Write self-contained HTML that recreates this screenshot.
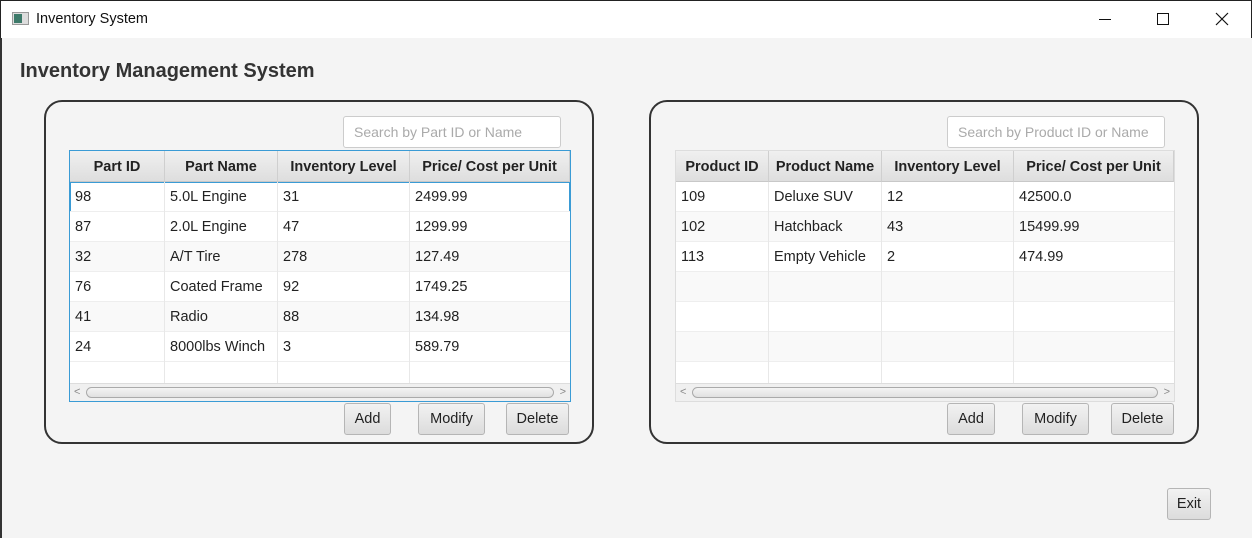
<!DOCTYPE html>
<html><head><meta charset="utf-8"><style>
*{box-sizing:border-box;margin:0;padding:0}
body{width:1252px;height:538px;background:#f4f4f4;font-family:"Liberation Sans",sans-serif;position:relative;overflow:hidden;color:#333}
.abs{position:absolute}
.tb{left:0;top:0;width:1252px;height:38px;background:#fff;border-top:1px solid #222;border-left:1px solid #222;border-right:1px solid #222}
.panel{border:2px solid #333;border-radius:18px;height:344px;width:550px;top:100px}
.search{height:32px;width:218px;top:116px;background:#fff;border:1px solid #ccc;border-radius:3px;font-size:14px;color:#aaa;padding:7px 10px;white-space:nowrap}
.tbl{top:150px;height:252px;background:#fff;border:1px solid #ccc}
.tbl.sel{border:1px solid #3a9bd5}
.hdr{position:absolute;top:0;height:31px;background:linear-gradient(#f0f0f0,#dedede);border-right:1px solid #cfcfcf;border-bottom:1px solid #c8c8c8;font-weight:bold;font-size:14.5px;color:#222;text-align:center;line-height:33px;white-space:nowrap;overflow:hidden}
.cell{position:absolute;height:30px;border-right:1px solid #e8e8e8;font-size:14.5px;line-height:30px;padding-left:5px;color:#222;white-space:nowrap}
.sb{position:absolute;left:0;right:0;bottom:0;height:18px;background:#f0f0f0;border-top:1px solid #ddd}
.sb .th{position:absolute;left:16px;right:16px;top:3px;height:11px;border:1px solid #aaa;border-radius:6px;background:linear-gradient(#f4f4f4,#e0e0e0)}
.sb span{position:absolute;top:0;font-size:11px;color:#888;line-height:17px}
.btn{height:32px;top:403px;border:1px solid #b5b5b5;border-radius:3px;background:linear-gradient(#f2f2f2,#dcdcdc);font-size:14.5px;text-align:center;line-height:30px;color:#222}
</style></head><body>
<div class="abs tb"></div>
<div class="abs" style="left:12px;top:12px;width:17px;height:13px;background:#ddd;border:1px solid #999"><div style="position:absolute;left:1px;top:1px;width:8px;height:9px;background:#3d7a6a"></div></div>
<div class="abs" style="left:36px;top:11px;font-size:14.5px;color:#111">Inventory System</div>
<div class="abs" style="left:1099px;top:19px;width:12px;height:1px;background:#111"></div>
<div class="abs" style="left:1157px;top:13px;width:12px;height:12px;border:1px solid #111"></div>
<svg class="abs" style="left:1215px;top:12px" width="14" height="14"><path d="M1 1L13 13M13 1L1 13" stroke="#111" stroke-width="1.2"/></svg>
<div class="abs" style="left:0;top:38px;width:2px;height:500px;background:#333"></div>
<div class="abs" style="left:20px;top:60px;font-size:20px;font-weight:bold;color:#333">Inventory Management System</div>

<div class="abs panel" style="left:44px"></div>
<div class="abs panel" style="left:649px"></div>
<div class="abs search" style="left:343px">Search by Part ID or Name</div>
<div class="abs search" style="left:947px">Search by Product ID or Name</div>

<div class="abs tbl sel" style="left:69px;width:502px">
<div class="hdr" style="left:0;width:95px">Part ID</div><div class="hdr" style="left:95px;width:113px">Part Name</div><div class="hdr" style="left:208px;width:132px">Inventory Level</div><div class="hdr" style="left:340px;width:160px">Price/ Cost per Unit</div>
<div style="position:absolute;left:0;top:31px;width:500px;height:30px;background:#fff;border:1px solid #3a9bd5"></div>
<div style="position:absolute;left:0;top:91px;width:500px;height:30px;background:#f9f9f9"></div>
<div style="position:absolute;left:0;top:151px;width:500px;height:30px;background:#f9f9f9"></div>
<div style="position:absolute;left:0;top:211px;width:500px;height:20px;background:#fff"></div>
<div style="position:absolute;left:0;top:60px;width:500px;height:1px;background:#eee"></div>
<div style="position:absolute;left:0;top:90px;width:500px;height:1px;background:#eee"></div>
<div style="position:absolute;left:0;top:120px;width:500px;height:1px;background:#eee"></div>
<div style="position:absolute;left:0;top:150px;width:500px;height:1px;background:#eee"></div>
<div style="position:absolute;left:0;top:180px;width:500px;height:1px;background:#eee"></div>
<div style="position:absolute;left:0;top:210px;width:500px;height:1px;background:#eee"></div>
<div style="position:absolute;left:94px;top:31px;width:1px;height:201px;background:#e8e8e8"></div>
<div style="position:absolute;left:207px;top:31px;width:1px;height:201px;background:#e8e8e8"></div>
<div style="position:absolute;left:339px;top:31px;width:1px;height:201px;background:#e8e8e8"></div>
<div class="cell" style="left:0;top:31px;border:0">98</div><div class="cell" style="left:95px;top:31px;border:0">5.0L Engine</div><div class="cell" style="left:208px;top:31px;border:0">31</div><div class="cell" style="left:340px;top:31px;border:0">2499.99</div>
<div class="cell" style="left:0;top:61px;border:0">87</div><div class="cell" style="left:95px;top:61px;border:0">2.0L Engine</div><div class="cell" style="left:208px;top:61px;border:0">47</div><div class="cell" style="left:340px;top:61px;border:0">1299.99</div>
<div class="cell" style="left:0;top:91px;border:0">32</div><div class="cell" style="left:95px;top:91px;border:0">A/T Tire</div><div class="cell" style="left:208px;top:91px;border:0">278</div><div class="cell" style="left:340px;top:91px;border:0">127.49</div>
<div class="cell" style="left:0;top:121px;border:0">76</div><div class="cell" style="left:95px;top:121px;border:0">Coated Frame</div><div class="cell" style="left:208px;top:121px;border:0">92</div><div class="cell" style="left:340px;top:121px;border:0">1749.25</div>
<div class="cell" style="left:0;top:151px;border:0">41</div><div class="cell" style="left:95px;top:151px;border:0">Radio</div><div class="cell" style="left:208px;top:151px;border:0">88</div><div class="cell" style="left:340px;top:151px;border:0">134.98</div>
<div class="cell" style="left:0;top:181px;border:0">24</div><div class="cell" style="left:95px;top:181px;border:0">8000lbs Winch</div><div class="cell" style="left:208px;top:181px;border:0">3</div><div class="cell" style="left:340px;top:181px;border:0">589.79</div>
<div class="sb"><span style="left:4px">&lt;</span><div class="th"></div><span style="right:4px">&gt;</span></div>
</div>

<div class="abs tbl" style="left:675px;width:500px;border-color:#ddd">
<div class="hdr" style="left:0;width:93px">Product ID</div><div class="hdr" style="left:93px;width:113px">Product Name</div><div class="hdr" style="left:206px;width:132px">Inventory Level</div><div class="hdr" style="left:338px;width:160px">Price/ Cost per Unit</div>
<div style="position:absolute;left:0;top:61px;width:498px;height:30px;background:#f9f9f9"></div>
<div style="position:absolute;left:0;top:121px;width:498px;height:30px;background:#f9f9f9"></div>
<div style="position:absolute;left:0;top:181px;width:498px;height:30px;background:#f9f9f9"></div>
<div style="position:absolute;left:0;top:60px;width:498px;height:1px;background:#eee"></div>
<div style="position:absolute;left:0;top:90px;width:498px;height:1px;background:#eee"></div>
<div style="position:absolute;left:0;top:120px;width:498px;height:1px;background:#eee"></div>
<div style="position:absolute;left:0;top:150px;width:498px;height:1px;background:#eee"></div>
<div style="position:absolute;left:0;top:180px;width:498px;height:1px;background:#eee"></div>
<div style="position:absolute;left:0;top:210px;width:498px;height:1px;background:#eee"></div>
<div style="position:absolute;left:92px;top:31px;width:1px;height:201px;background:#e8e8e8"></div>
<div style="position:absolute;left:205px;top:31px;width:1px;height:201px;background:#e8e8e8"></div>
<div style="position:absolute;left:337px;top:31px;width:1px;height:201px;background:#e8e8e8"></div>
<div class="cell" style="left:0;top:31px;border:0">109</div><div class="cell" style="left:93px;top:31px;border:0">Deluxe SUV</div><div class="cell" style="left:206px;top:31px;border:0">12</div><div class="cell" style="left:338px;top:31px;border:0">42500.0</div>
<div class="cell" style="left:0;top:61px;border:0">102</div><div class="cell" style="left:93px;top:61px;border:0">Hatchback</div><div class="cell" style="left:206px;top:61px;border:0">43</div><div class="cell" style="left:338px;top:61px;border:0">15499.99</div>
<div class="cell" style="left:0;top:91px;border:0">113</div><div class="cell" style="left:93px;top:91px;border:0">Empty Vehicle</div><div class="cell" style="left:206px;top:91px;border:0">2</div><div class="cell" style="left:338px;top:91px;border:0">474.99</div>
<div class="sb"><span style="left:4px">&lt;</span><div class="th"></div><span style="right:4px">&gt;</span></div>
</div>

<div class="abs btn" style="left:344px;width:47px">Add</div>
<div class="abs btn" style="left:418px;width:67px">Modify</div>
<div class="abs btn" style="left:506px;width:63px">Delete</div>
<div class="abs btn" style="left:947px;width:48px">Add</div>
<div class="abs btn" style="left:1022px;width:67px">Modify</div>
<div class="abs btn" style="left:1111px;width:63px">Delete</div>
<div class="abs btn" style="left:1167px;top:488px;width:44px">Exit</div>
</body></html>
